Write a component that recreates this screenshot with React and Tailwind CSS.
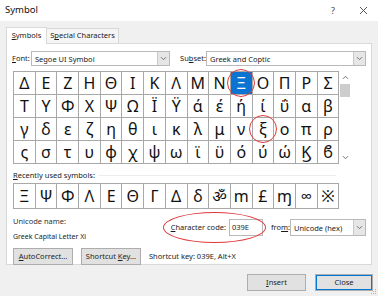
import React from 'react';

const font = { fontFamily: '"Noto Sans", "Open Sans", "DejaVu Sans", sans-serif' };

const rows = [
  ['Δ', 'Ε', 'Ζ', 'Η', 'Θ', 'Ι', 'Κ', 'Λ', 'Μ', 'Ν', 'Ξ', 'Ο', 'Π', 'Ρ', 'Σ'],
  ['Τ', 'Υ', 'Φ', 'Χ', 'Ψ', 'Ω', 'Ϊ', 'Ϋ', 'ά', 'έ', 'ή', 'ί', 'ΰ', 'α', 'β'],
  ['γ', 'δ', 'ε', 'ζ', 'η', 'θ', 'ι', 'κ', 'λ', 'μ', 'ν', 'ξ', 'ο', 'π', 'ρ'],
  ['ς', 'σ', 'τ', 'υ', 'φ', 'χ', 'ψ', 'ω', 'ϊ', 'ϋ', 'ό', 'ύ', 'ώ', 'Ϗ', 'ϐ'],
];

const recent = ['Ξ', 'Ψ', 'Φ', 'Λ', 'Ε', 'Θ', 'Γ', 'Δ', 'δ', 'ॐ', 'm', '£', 'ɱ', '∞', '※'];

const Chevron = () => (
  <svg width="7" height="5" viewBox="0 0 7 5" fill="none" stroke="#707070" strokeWidth="1">
    <path d="M1 1.2 L3.5 3.7 L6 1.2" />
  </svg>
);

const Select = ({ value, className }) => (
  <div className={`flex items-center h-[15px] bg-white border border-[#b9b9b9] ${className}`}>
    <span className="flex-1 pl-[3px] text-[7.5px] text-[#222] leading-[12px] whitespace-nowrap">{value}</span>
    <div className="w-[12px] h-full flex items-center justify-center bg-[#e6e6e6] border-l border-[#c9c9c9]">
      <Chevron />
    </div>
  </div>
);

const Button = ({ children, className = '' }) => (
  <div className={`h-[17px] flex items-center justify-center bg-[#e1e1e1] border border-[#adadad] text-[7.5px] text-[#222] ${className}`}>
    {children}
  </div>
);

export default function App() {
  return (
    <div className="relative w-[378px] h-[296px] bg-[#f0f0f0] flex flex-col overflow-hidden text-[#1a1a1a]" style={font}>
      {/* Title bar */}
      <div className="h-[21px] bg-white flex items-center pl-[5px] pr-[10px]">
        <span className="text-[9.5px] text-[#111]">Symbol</span>
        <span className="ml-auto text-[9px] text-[#444]">?</span>
        <svg className="ml-[24px]" width="9" height="9" viewBox="0 0 9 9" stroke="#444" strokeWidth="0.9">
          <path d="M1 1 L8 8 M8 1 L1 8" />
        </svg>
      </div>

      {/* Tabs */}
      <div className="flex items-end mt-[5px] ml-[6px] h-[17px]">
        <div className="h-[17px] w-[41px] bg-white border border-b-0 border-[#d9d9d9] flex items-center justify-center text-[7.5px] relative z-10 -mb-px">
          <span><u>S</u>ymbols</span>
        </div>
        <div className="h-[15px] w-[72px] bg-[#f5f5f5] border border-l-0 border-b-0 border-[#d9d9d9] flex items-center justify-center text-[7.5px]">
          <span>S<u>p</u>ecial Characters</span>
        </div>
      </div>

      {/* Panel */}
      <div className="mx-[6px] h-[222px] bg-white border border-[#d9d9d9] flex flex-col px-[5px]">
        {/* Font / Subset row */}
        <div className="flex items-center mt-[7px]">
          <span className="text-[7.5px] w-[19px]"><u>F</u>ont:</span>
          <Select value="Segoe UI Symbol" className="w-[140px]" />
          <span className="text-[7.5px] ml-[10px] w-[26px]">Su<u>b</u>set:</span>
          <Select value="Greek and Coptic" className="w-[161px]" />
        </div>

        {/* Character grid + scrollbar */}
        <div className="flex mt-[5px] ml-px">
          <div className="grid grid-cols-[repeat(15,21.7px)] border-l border-t border-[#a8a8a8]">
            {rows.flat().map((c, i) => {
              const selected = i === 10;
              const circled = i === 41;
              return (
                <div
                  key={i}
                  className={`relative h-[23px] border-r border-b border-[#a8a8a8] flex items-center justify-center text-[16px] leading-none ${selected ? 'bg-[#0b74d3] text-white' : 'text-[#111]'}`}
                >
                  {c}
                  {(selected || circled) && (
                    <div className="absolute w-[28px] h-[28px] rounded-full border-[1.5px] border-[#e0383a] left-1/2 top-1/2 -translate-x-1/2 -translate-y-1/2 z-10" />
                  )}
                </div>
              );
            })}
          </div>
          <div className="w-[12px] flex flex-col items-center bg-white">
            <svg className="mt-[4px]" width="7" height="5" viewBox="0 0 7 5" fill="none" stroke="#707070" strokeWidth="1">
              <path d="M1 3.8 L3.5 1.3 L6 3.8" />
            </svg>
            <div className="mt-[4px] w-[10px] h-[13px] bg-[#cdcdcd]" />
            <svg className="mt-auto mb-[4px]" width="7" height="5" viewBox="0 0 7 5" fill="none" stroke="#707070" strokeWidth="1">
              <path d="M1 1.2 L3.5 3.7 L6 1.2" />
            </svg>
          </div>
        </div>

        {/* Recently used */}
        <div className="flex items-center mt-[6px] ml-px">
          <span className="text-[7.5px] whitespace-nowrap"><u>R</u>ecently used symbols:</span>
          <div className="flex-1 ml-[4px] mr-[30px] h-px bg-[#ececec]" />
        </div>
        <div className="flex mt-[2px] ml-px">
          <div className="grid grid-cols-[repeat(15,21.7px)] border-l border-t border-[#a8a8a8]">
            {recent.map((c, i) => (
              <div key={i} className="h-[25px] border-r border-b border-[#a8a8a8] flex items-center justify-center text-[16px] leading-none text-[#111]">
                {c}
              </div>
            ))}
          </div>
        </div>

        {/* Unicode name / character code */}
        <div className="flex mt-[4px] ml-px">
          <div className="flex flex-col w-[158px]">
            <span className="text-[7.5px] text-[#333] leading-[16px]">Unicode name:</span>
            <span className="text-[7px] text-[#222] leading-[16px]">Greek Capital Letter Xi</span>
          </div>
          <div className="relative flex items-center mt-[6px] h-[17px]">
            <span className="text-[7.5px] whitespace-nowrap"><u>C</u>haracter code:</span>
            <div className="ml-[3px] w-[34px] h-[17px] border border-[#b9b9b9] bg-white flex items-center pl-[2px] text-[7.5px]">039E</div>
            <div className="absolute -left-[8px] -top-[7px] w-[103px] h-[31px] rounded-[50%] border-[1.5px] border-[#e0383a]" />
          </div>
          <div className="flex items-center mt-[6px] h-[17px] ml-[8px]">
            <span className="text-[7.5px] w-[19px]">fro<u>m</u>:</span>
            <Select value="Unicode (hex)" className="w-[76px] h-[17px]" />
          </div>
        </div>

        {/* Buttons row */}
        <div className="flex items-center mt-[3px] ml-px">
          <Button className="w-[60px]"><span><u>A</u>utoCorrect...</span></Button>
          <Button className="w-[60px] ml-[8px]"><span>Shortcut <u>K</u>ey...</span></Button>
          <span className="ml-[8px] text-[7.5px] text-[#222]">Shortcut key: 039E, Alt+X</span>
        </div>
      </div>

      {/* Dialog buttons */}
      <div className="flex justify-end items-center mt-[9px] pr-[5px]">
        <Button className="w-[59px]"><span><u>I</u>nsert</span></Button>
        <Button className="w-[58px] ml-[9px] border-[#0078d7] shadow-[inset_0_0_0_1px_#0078d7]">Close</Button>
      </div>
      <svg className="absolute left-[370px] top-[288px]" width="7" height="7" viewBox="0 0 7 7" fill="#b0b0b0">
        <rect x="5" y="1" width="1" height="1" />
        <rect x="3" y="3" width="1" height="1" />
        <rect x="5" y="3" width="1" height="1" />
        <rect x="1" y="5" width="1" height="1" />
        <rect x="3" y="5" width="1" height="1" />
        <rect x="5" y="5" width="1" height="1" />
      </svg>
    </div>
  );
}
